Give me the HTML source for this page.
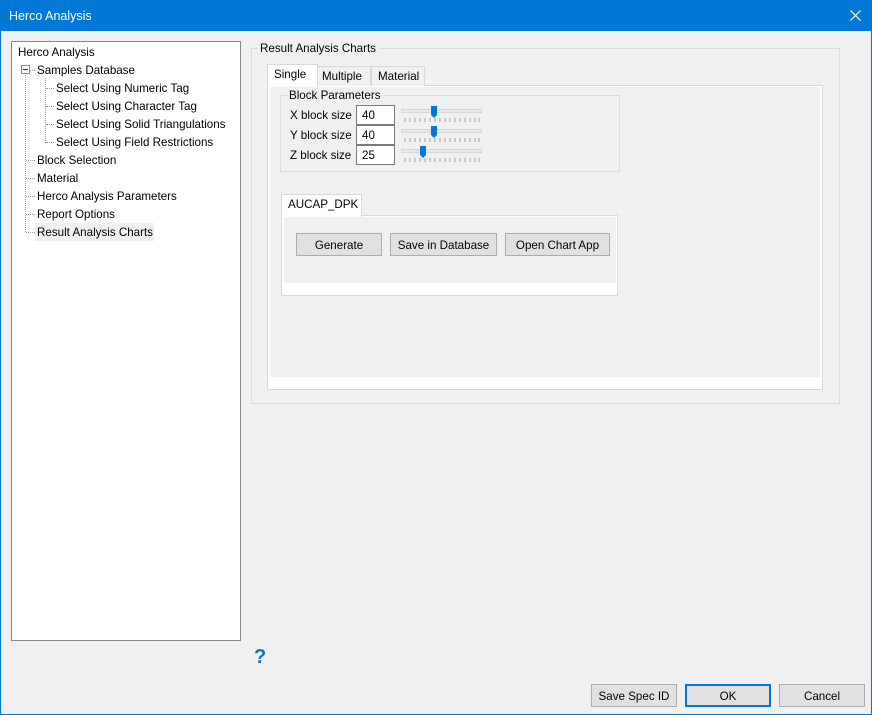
<!DOCTYPE html><html><head><style>
*{box-sizing:border-box;margin:0;padding:0}
body{width:872px;height:715px;background:#f0f0f0;font:11.6px "Liberation Sans",sans-serif;color:#000;position:relative;overflow:hidden}
.a{position:absolute}
.t{position:absolute;white-space:nowrap;line-height:14px;transform:translateY(2px)}
.btn{position:absolute;background:#e1e1e1;border:1px solid #adadad;text-align:center;line-height:23px;height:23px}
.inp{position:absolute;background:#fff;border:1px solid #7a7a7a;width:39px;height:20px;padding-left:5px;line-height:20px}
.dv{position:absolute;border-left:1px dotted #a0a0a0}
.dh{position:absolute;border-top:1px dotted #a0a0a0}
</style></head><body>
<div class="a" style="left:0;top:0;width:872px;height:715px;border:1px solid #0078d7"></div>
<div class="a" style="left:0;top:0;width:872px;height:31px;background:#0078d7"></div>
<div class="t" style="left:9px;top:7px;color:#fff;font-size:12.5px">Herco Analysis</div>
<svg class="a" style="left:850px;top:10px" width="11" height="11"><path d="M0.5 0.5L10.5 10.5M10.5 0.5L0.5 10.5" stroke="#fff" stroke-width="1.2"/></svg>

<div class="a" style="left:11px;top:41px;width:230px;height:600px;background:#fff;border:1px solid #828790"></div>
<div class="t" style="left:18px;top:44px">Herco Analysis</div>
<div class="dv" style="left:25px;top:72px;height:160px"></div>
<div class="a" style="left:21px;top:65px;width:9px;height:9px;border:1px solid #919191;background:#fff"></div>
<div class="a" style="left:23px;top:69px;width:5px;height:1px;background:#333"></div>
<div class="dh" style="left:30px;top:70px;width:5px"></div>
<div class="t" style="left:37px;top:62px">Samples Database</div>
<div class="dv" style="left:45px;top:78px;height:65px"></div>
<div class="dh" style="left:46px;top:88px;width:8px"></div><div class="t" style="left:56px;top:80px">Select Using Numeric Tag</div>
<div class="dh" style="left:46px;top:106px;width:8px"></div><div class="t" style="left:56px;top:98px">Select Using Character Tag</div>
<div class="dh" style="left:46px;top:124px;width:8px"></div><div class="t" style="left:56px;top:116px">Select Using Solid Triangulations</div>
<div class="dh" style="left:46px;top:142px;width:8px"></div><div class="t" style="left:56px;top:134px">Select Using Field Restrictions</div>
<div class="dh" style="left:26px;top:160px;width:9px"></div><div class="t" style="left:37px;top:152px">Block Selection</div>
<div class="dh" style="left:26px;top:178px;width:9px"></div><div class="t" style="left:37px;top:170px">Material</div>
<div class="dh" style="left:26px;top:196px;width:9px"></div><div class="t" style="left:37px;top:188px">Herco Analysis Parameters</div>
<div class="dh" style="left:26px;top:214px;width:9px"></div><div class="t" style="left:37px;top:206px">Report Options</div>
<div class="dh" style="left:26px;top:232px;width:9px"></div>
<div class="a" style="left:35px;top:223px;width:119px;height:18px;background:#f0f0f0"></div>
<div class="t" style="left:37px;top:224px">Result Analysis Charts</div>

<div class="a" style="left:251px;top:48px;width:589px;height:356px;border:1px solid #dcdcdc"></div>
<div class="t" style="left:257px;top:40px;background:#f0f0f0;padding:0 3px">Result Analysis Charts</div>

<div class="a" style="left:267px;top:85px;width:556px;height:305px;background:#fff;border:1px solid #d9d9d9"></div>
<div class="a" style="left:270px;top:87px;width:550px;height:290px;background:#f0f0f0"></div>
<div class="a" style="left:317px;top:66px;width:54px;height:20px;background:#f0f0f0;border:1px solid #d9d9d9;border-bottom:none"></div>
<div class="a" style="left:371px;top:66px;width:54px;height:20px;background:#f0f0f0;border:1px solid #d9d9d9;border-bottom:none"></div>
<div class="a" style="left:267px;top:64px;width:51px;height:23px;background:#fff;border:1px solid #d9d9d9;border-bottom:none"></div>
<div class="t" style="left:274px;top:66px">Single</div>
<div class="t" style="left:322px;top:68px">Multiple</div>
<div class="t" style="left:378px;top:68px">Material</div>

<div class="a" style="left:280px;top:95px;width:340px;height:77px;border:1px solid #dcdcdc"></div>
<div class="t" style="left:287px;top:87px;background:#f0f0f0;padding:0 2px">Block Parameters</div>
<div class="t" style="left:290px;top:107px">X block size</div>
<div class="t" style="left:290px;top:127px">Y block size</div>
<div class="t" style="left:290px;top:147px">Z block size</div>
<div class="inp" style="left:356px;top:105px">40</div>
<div class="inp" style="left:356px;top:125px">40</div>
<div class="inp" style="left:356px;top:145px">25</div>
<svg class="a" style="left:400px;top:104px" width="84" height="64">
<g fill="#e7e7e7" stroke="#d6d6d6"><rect x="1.5" y="5.5" width="80" height="3"/><rect x="1.5" y="25.5" width="80" height="3"/><rect x="1.5" y="45.5" width="80" height="3"/></g>
<g stroke="#a0a0a0"><path d="M5 14v4M10 14v4M15 14v4M20 14v4M25 14v4M30 14v4M35 14v4M40 14v4M45 14v4M50 14v4M55 14v4M60 14v4M65 14v4M70 14v4M75 14v4M79 14v4"/><path d="M5 34v4M10 34v4M15 34v4M20 34v4M25 34v4M30 34v4M35 34v4M40 34v4M45 34v4M50 34v4M55 34v4M60 34v4M65 34v4M70 34v4M75 34v4M79 34v4"/><path d="M5 54v4M10 54v4M15 54v4M20 54v4M25 54v4M30 54v4M35 54v4M40 54v4M45 54v4M50 54v4M55 54v4M60 54v4M65 54v4M70 54v4M75 54v4M79 54v4"/></g>
<g fill="#0078d7"><path d="M31 2h6v9l-3 3l-3-3z"/><path d="M31 22h6v9l-3 3l-3-3z"/><path d="M20 42h6v9l-3 3l-3-3z"/></g></svg>

<div class="a" style="left:281px;top:215px;width:337px;height:81px;background:#fff;border:1px solid #d9d9d9"></div>
<div class="a" style="left:284px;top:217px;width:332px;height:66px;background:#f0f0f0"></div>
<div class="a" style="left:281px;top:194px;width:81px;height:23px;background:#fff;border:1px solid #d9d9d9;border-bottom:none"></div>
<div class="t" style="left:288px;top:196px">AUCAP_DPK</div>
<div class="btn" style="left:296px;top:233px;width:86px">Generate</div>
<div class="btn" style="left:390px;top:233px;width:107px">Save in Database</div>
<div class="btn" style="left:505px;top:233px;width:105px">Open Chart App</div>

<div class="t" style="left:254px;top:644px;color:#1a6fc0;font-weight:bold;font-size:20px;line-height:22px">?</div>
<div class="btn" style="left:591px;top:684px;width:86px">Save Spec ID</div>
<div class="btn" style="left:685px;top:684px;width:86px;border:2px solid #0078d7;line-height:21px">OK</div>
<div class="btn" style="left:779px;top:684px;width:86px">Cancel</div>
</body></html>
